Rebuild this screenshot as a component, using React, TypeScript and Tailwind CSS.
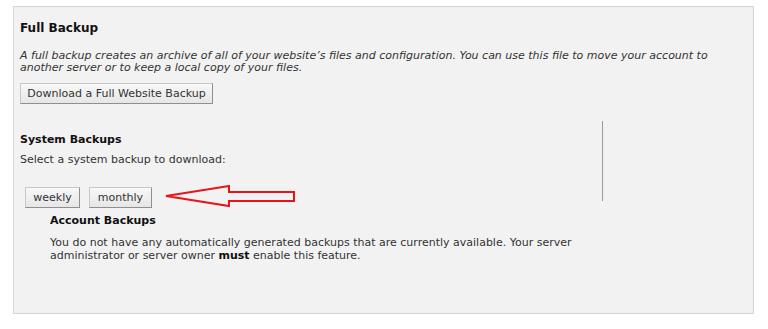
import React from "react";

const Btn = ({ children, className = "" }: { children: React.ReactNode; className?: string }) => (
  <button
    className={`h-[21px] whitespace-nowrap border border-[#c8c8c8] border-r-[#8f8f8f] border-b-[#8f8f8f] bg-gradient-to-b from-[#f8f8f8] to-[#e6e6e6] text-[#333] text-[11px] leading-none ${className}`}
  >
    {children}
  </button>
);

export default function App() {
  return (
    <div className="w-[768px] h-[329px] bg-white pt-[6px] pl-[13px] font-['DejaVu_Sans',Verdana,sans-serif] text-[#333]">
      <div className="w-[741px] h-[308px] bg-[#f2f2f2] border border-[#d6d6d6] pl-[6px] pt-[14px]">
        <h2 className="text-[12px] font-bold text-[#111] leading-[14px]">Full Backup</h2>
        <p className="mt-[15px] text-[11px] italic leading-[12px] w-[700px]">
          A full backup creates an archive of all of your website’s files and configuration. You can use this file to move your account to another server or to keep a local copy of your files.
        </p>
        <Btn className="mt-[9px] w-[193px]">Download a Full Website Backup</Btn>
        <div className="flex items-start mt-[17px]">
          <div className="w-[582px]">
            <h3 className="mt-[12px] text-[11px] font-bold text-[#111] leading-[14px]">System Backups</h3>
            <p className="mt-[6px] text-[11px] leading-[14px]">Select a system backup to download:</p>
            <div className="flex items-center mt-[18px] pl-[5px]">
              <Btn className="w-[55px]">weekly</Btn>
              <Btn className="w-[63px] ml-[9px]">monthly</Btn>
              <svg width="134" height="24" viewBox="0 0 134 24" className="ml-[12px]">
                <polygon
                  points="2,11 65,1 65,7 130,7 130,16 65,16 65,21"
                  fill="none"
                  stroke="#e8141c"
                  strokeWidth="2"
                  strokeLinejoin="miter"
                />
              </svg>
            </div>
          </div>
          <div className="w-px h-[80px] bg-[#999]" />
        </div>
        <div className="pl-[30px]">
          <h3 className="mt-[5px] text-[11px] font-bold text-[#111] leading-[14px]">Account Backups</h3>
          <p className="mt-[8px] text-[11px] leading-[13px] w-[560px]">
            You do not have any automatically generated backups that are currently available. Your server administrator or server owner <b className="text-[#111]">must</b> enable this feature.
          </p>
        </div>
      </div>
    </div>
  );
}
